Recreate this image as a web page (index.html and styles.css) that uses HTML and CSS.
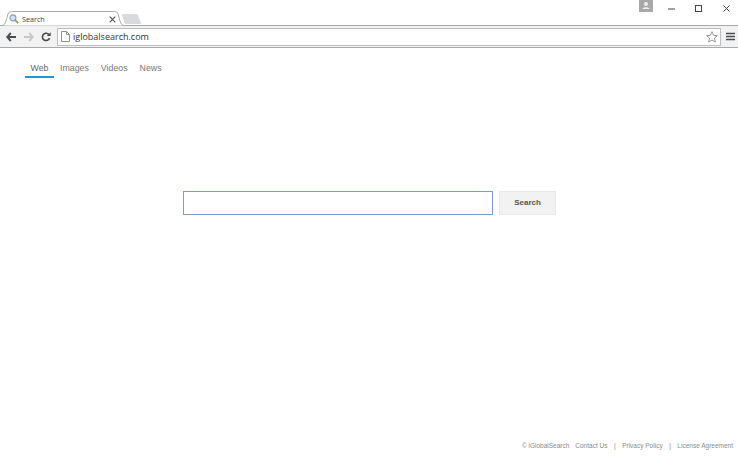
FILE: index.html
```html
<!DOCTYPE html>
<html lang="en">
<head>
<meta charset="utf-8">
<title>Search</title>
<link rel="stylesheet" href="styles.css">
</head>
<body>
<header class="browser">
  <div class="strip">
    <div class="tab">
      <svg class="tab-shape" width="124" height="15" viewBox="0 0 124 15"><path d="M0.500 14.500 C3 14.500 4 13 5 10 L7 3 C7.500 1.500 8.500 0.500 10.500 0.500 H113.500 C115.500 0.500 116.500 1.500 117 3 L119 10 C120 13 121 14.500 123.500 14.500" fill="#fff" stroke="#a9a9a9"/></svg>
      <svg class="favicon" width="10" height="10" viewBox="0 0 11 11"><circle cx="4.300" cy="4.300" r="3.300" fill="#cfe0ee" stroke="#7f9db5" stroke-width="1.200"/><path d="M6.800 6.800 L10 10" stroke="#b58a55" stroke-width="1.800"/></svg>
      <span class="tab-title">Search</span>
      <svg class="tab-close" width="7" height="7" viewBox="0 0 7 7"><path d="M0.700 0.700 L6.300 6.300 M6.300 0.700 L0.700 6.300" stroke="#555" stroke-width="1.200"/></svg>
    </div>
    <svg class="new-tab" width="19" height="10" viewBox="0 0 19 10"><path d="M0 1 Q0 0 1.500 0 H14 Q15.500 0 16 1 L19 9 Q19 10 18 10 H4 Q3 10 2.500 9 Z" fill="#d8dade"/></svg>
    <div class="window-controls">
      <span class="avatar"><svg width="14" height="12" viewBox="0 0 14 12"><circle cx="7" cy="4" r="2" fill="#eee"/><path d="M3.500 9 C3.500 6.800 10.500 6.800 10.500 9 Z" fill="#eee"/></svg></span>
      <svg class="ctl-min" width="7" height="2" viewBox="0 0 7 2"><path d="M0 1 H7" stroke="#444" stroke-width="1"/></svg>
      <svg class="ctl-max" width="7" height="7" viewBox="0 0 7 7"><rect x="0.500" y="0.500" width="6" height="6" fill="none" stroke="#444"/></svg>
      <svg class="ctl-close" width="7" height="7" viewBox="0 0 7 7"><path d="M0.500 0.500 L6.500 6.500 M6.500 0.500 L0.500 6.500" stroke="#444" stroke-width="1"/></svg>
    </div>
  </div>
  <div class="toolbar">
    <svg class="nav-icon" width="10" height="10" viewBox="0 0 10 10"><path d="M4.800 1 L1.300 5 L4.800 9 M1.500 5 H10" fill="none" stroke="#4a4d50" stroke-width="1.900"/></svg>
    <svg class="nav-icon forward" width="10" height="10" viewBox="0 0 10 10"><path d="M5.200 1 L8.700 5 L5.200 9 M8.500 5 H0" fill="none" stroke="#c5c7ca" stroke-width="1.900"/></svg>
    <svg class="nav-icon reload" width="10" height="10" viewBox="0 0 11 11"><path d="M9 3.300 A4 4 0 1 0 9.400 6.500" fill="none" stroke="#4a4d50" stroke-width="1.800"/><path d="M6.300 4.500 H10.700 V0.300 Z" fill="#4a4d50"/></svg>
    <div class="omnibox">
      <svg class="page-icon" width="9" height="11" viewBox="0 0 9 11"><path d="M0.500 0.500 H5.500 L8.500 3.500 V10.500 H0.500 Z M5.500 0.500 V3.500 H8.500" fill="#fff" stroke="#8d8f92"/></svg>
      <span class="url">iglobalsearch.com</span>
      <svg class="star" width="12" height="12" viewBox="0 0 13 13"><path d="M6.500 0.800 L8.200 4.700 L12.300 5.100 L9.200 7.800 L10.100 12 L6.500 9.800 L2.900 12 L3.800 7.800 L0.700 5.100 L4.800 4.700 Z" fill="#fff" stroke="#8b8d90"/></svg>
    </div>
    <svg class="menu" width="9" height="9" viewBox="0 0 9 9"><path d="M0 1.500 H9 M0 4.500 H9 M0 7.500 H9" stroke="#4a4d50" stroke-width="1.600"/></svg>
  </div>
</header>
<main class="page">
  <nav class="verticals">
    <a class="vertical active">Web</a>
    <a class="vertical">Images</a>
    <a class="vertical">Videos</a>
    <a class="vertical">News</a>
  </nav>
  <form class="search">
    <input class="search-input" type="text" aria-label="Search">
    <button class="search-button" type="button">Search</button>
  </form>
  <footer class="footer">
    <span>© iGlobalSearch</span>
    <a>Contact Us</a>
    <span class="sep">|</span>
    <a>Privacy Policy</a>
    <span class="sep">|</span>
    <a>License Agreement</a>
  </footer>
</main>
</body>
</html>
```
FILE: styles.css
```css
* { box-sizing: border-box; }
html, body { margin: 0; height: 100%; }
body {
  width: 738px;
  height: 456px;
  overflow: hidden;
  background: #fff;
  font-family: "Liberation Sans", Arial, sans-serif;
  display: flex;
  flex-direction: column;
}
svg { display: block; flex: none; }

.browser { flex: none; height: 48px; border-bottom: 1px solid #a8a8a8; }
.strip {
  height: 26px;
  display: flex;
  align-items: flex-end;
  padding-left: 1px;
  position: relative;
  border-bottom: 1px solid #a9a9a9;
}
.tab {
  width: 124px;
  height: 15px;
  margin-bottom: -1px;
  position: relative;
  display: flex;
  align-items: center;
  padding: 1px 0 0 8px;
}
.tab-shape { position: absolute; left: 0; top: 0; }
.favicon, .tab-title, .tab-close { position: relative; }
.tab-title { margin-left: 3px; font: 7.200px "Open Sans", sans-serif; color: #444; flex: 1; }
.tab-close { margin-right: 9px; }
.new-tab { margin: 0 0 1px -3px; }
.window-controls {
  position: absolute;
  right: 0;
  top: 0;
  display: flex;
  align-items: flex-start;
}
.avatar {
  width: 14px;
  height: 12px;
  background: #a8a8a8;
  margin-right: 15px;
  display: flex;
  justify-content: center;
}
.ctl-min { margin: 8px 20px 0 0; }
.ctl-max { margin: 5px 21px 0 0; }
.ctl-close { margin: 5px 8px 0 0; }

.toolbar {
  height: 21px;
  display: flex;
  align-items: center;
  padding: 0 3px 0 6px;
  background: #f2f2f2;
}
.nav-icon { margin-right: 8px; }
.forward { margin-right: 7px; }
.reload { margin-right: 6px; }
.omnibox {
  width: 664px;
  height: 18px;
  border: 1px solid #bdbdbd;
  background: #fff;
  display: flex;
  align-items: center;
  padding: 0 2px 0 3px;
}
.page-icon { margin-right: 2px; }
.url { flex: 1; font: 9px "Open Sans", sans-serif; color: #333; margin-left: 1px; }
.menu { margin-left: 5px; }

.page { flex: 1; display: flex; flex-direction: column; min-height: 0; }
.verticals { display: flex; padding: 12px 0 0 25px; height: 31px; }
.vertical {
  height: 18px;
  font-size: 8.800px;
  line-height: 16px;
  color: #777;
  padding: 0 6px;
}
.vertical.active { color: #666; width: 29px; border-bottom: 2px solid #1a9ad6; text-align: center; padding: 0; }
.search { display: flex; margin: 112px 0 0 183px; gap: 6px; }
.search-input {
  width: 310px;
  height: 24px;
  border: 1px solid #7d9fc7;
  background: #fff;
  outline: 0;
  padding: 0;
}
.search-button {
  width: 57px;
  height: 24px;
  border: 1px solid #e8e8e8;
  background: #f2f2f2;
  font: bold 8px "Liberation Sans", Arial, sans-serif;
  color: #555;
  padding: 0 0 2px;
}
.footer {
  margin-top: auto;
  display: flex;
  justify-content: flex-end;
  gap: 6px;
  padding: 0 5px 5px 0;
  font-size: 6.500px;
  line-height: 10px;
  color: #8a8a8a;
}
.sep { margin: 0 0.500px; }
```
